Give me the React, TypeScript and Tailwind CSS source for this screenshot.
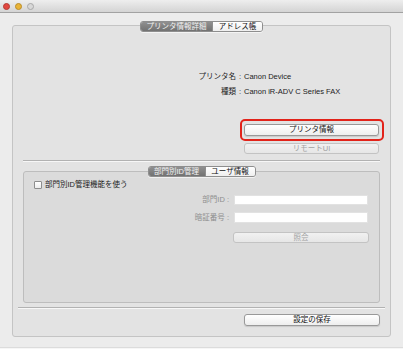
import React from "react";

const font = { fontFamily: '"Liberation Sans", "Noto Sans CJK JP", sans-serif' };

const Tabs = ({ active, other, w1, w2 }: { active: string; other: string; w1: number; w2: number }) => (
  <div className="flex justify-center h-[11px] relative z-10">
    <div className="flex rounded-[3px] border border-[#8e8e8e] overflow-hidden shadow-[0_1px_0_rgba(255,255,255,0.6)]">
      <div
        className="flex items-center justify-center bg-gradient-to-b from-[#909090] to-[#727272] text-[#f2f2f2] leading-none"
        style={{ width: w1 }}
      >
        {active}
      </div>
      <div
        className="flex items-center justify-center bg-gradient-to-b from-white to-[#efefef] text-[#111] border-l border-[#8e8e8e] leading-none"
        style={{ width: w2 }}
      >
        {other}
      </div>
    </div>
  </div>
);

const Btn = ({ label, disabled, className = "" }: { label: string; disabled?: boolean; className?: string }) => (
  <div
    className={
      "flex items-center justify-center rounded-[3px] border leading-none " +
      (disabled
        ? "border-[#c3c3c3] bg-gradient-to-b from-[#f1f1f1] to-[#e6e6e6] text-[#a2a2a2] "
        : "border-[#999] bg-gradient-to-b from-white to-[#eeeeee] text-[#111] shadow-[0_1px_1px_rgba(0,0,0,0.12)] ") +
      className
    }
  >
    {label}
  </div>
);

export default function App() {
  return (
    <div className="w-[403px] h-[349px] bg-[#ececec] overflow-hidden flex flex-col text-[7.5px]" style={font}>
      {/* title bar */}
      <div className="h-[13px] shrink-0 bg-gradient-to-b from-[#eeeeee] to-[#d4d4d4] border-b border-[#a2a2a2] flex items-center pl-[3px] gap-[5px]">
        <div className="w-[7px] h-[7px] rounded-full bg-[#e2473f] border border-[#b23a33]" />
        <div className="w-[7px] h-[7px] rounded-full bg-[#e9b437] border border-[#b98c2a]" />
        <div className="w-[7px] h-[7px] rounded-full bg-[#d8d8d8] border border-[#a8a8a8]" />
      </div>

      {/* outer tab view */}
      <div className="mx-[12px] mt-[12px] h-[312px] shrink-0 border border-[#c4c4c4] rounded-[3px] bg-[#e3e3e3] flex flex-col">
        <div className="-mt-[5px]">
          <Tabs active="プリンタ情報詳細" other="アドレス帳" w1={71} w2={50} />
        </div>

        <div className="mt-[37px] flex flex-col text-[#1c1c1c]">
          <div className="flex h-[15px] items-center">
            <div className="w-[223px] text-right">プリンタ名</div>
            <div className="w-[8px] text-center">:</div>
            <div>Canon Device</div>
          </div>
          <div className="flex h-[15px] items-center">
            <div className="w-[223px] text-right">種類</div>
            <div className="w-[8px] text-center">:</div>
            <div>Canon iR-ADV C Series FAX</div>
          </div>
        </div>

        <div className="ml-[227px] mt-[20px] w-[144px] h-[22px] border-2 border-[#e2231a] rounded-[5px] pl-[2px] pt-[3px]">
          <Btn label="プリンタ情報" className="w-[135px] h-[12px]" />
        </div>
        <Btn label="リモートUI" disabled className="ml-[231px] mt-[2px] w-[135px] h-[11px]" />

        <div className="mx-[10px] mt-[6px] h-px bg-[#b2b2b2] shadow-[0_1px_0_rgba(255,255,255,0.7)]" />

        {/* inner tab view */}
        <div className="mx-[10px] mt-[10px] h-[132px] border border-[#bdbdbd] rounded-[3px] bg-[#dbdbdb] flex flex-col">
          <div className="-mt-[6px]">
            <Tabs active="部門別ID管理" other="ユーザ情報" w1={56} w2={50} />
          </div>

          <div className="mt-[3px] ml-[10px] flex items-center h-[10px] gap-[3px] text-[#1c1c1c]">
            <div className="w-[8px] h-[8px] rounded-[1px] border border-[#8d8d8d] bg-gradient-to-b from-white to-[#ececec]" />
            <span>部門別ID管理機能を使う</span>
          </div>

          <div className="mt-[5px] flex items-center h-[10px] text-[#8e8e8e]">
            <div className="w-[206px] text-right pr-[1px]">部門ID :</div>
            <div className="ml-[4px] w-[134px] h-[10px] bg-white border border-[#e2e2e2]" />
          </div>
          <div className="mt-[7px] flex items-center h-[11px] text-[#8e8e8e]">
            <div className="w-[206px] text-right pr-[1px]">暗証番号 :</div>
            <div className="ml-[4px] w-[134px] h-[11px] bg-white border border-[#e2e2e2]" />
          </div>

          <Btn label="照会" disabled className="ml-[209px] mt-[9px] w-[136px] h-[11px]" />
        </div>

        <div className="mx-[5px] mt-[4px] h-px bg-[#b2b2b2] shadow-[0_1px_0_rgba(255,255,255,0.7)]" />

        <Btn label="設定の保存" className="ml-[231px] mt-[6px] w-[136px] h-[12px]" />
      </div>

      <div className="mt-[10px] h-px bg-[#dcdcdc]" />
      <div className="flex-1 bg-[#f6f6f6]" />
    </div>
  );
}
